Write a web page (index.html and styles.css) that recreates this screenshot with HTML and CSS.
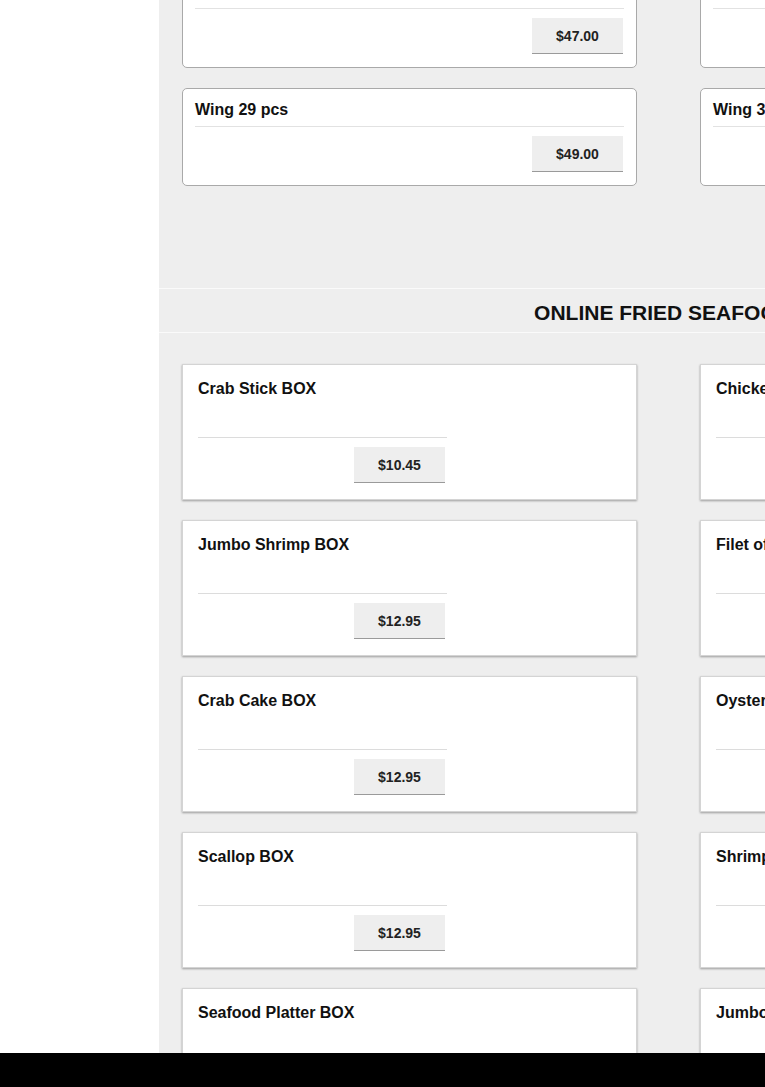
FILE: index.html
```html
<!DOCTYPE html>
<html lang="en">
<head>
<meta charset="utf-8">
<title>Online Menu</title>
<link rel="stylesheet" href="styles.css">
</head>
<body>
<div class="page">
  <aside class="sidebar"></aside>
  <main class="main">
    <section class="grid wings">
      <div class="wcard">
        <div class="wtitle">Wing 27 pcs</div>
        <div class="brow"><button class="price">$47.00</button></div>
      </div>
      <div class="wcard">
        <div class="wtitle">Wing 28 pcs</div>
        <div class="brow"><button class="price">$48.00</button></div>
      </div>
      <div class="wcard">
        <div class="wtitle">Wing 29 pcs</div>
        <div class="brow"><button class="price">$49.00</button></div>
      </div>
      <div class="wcard">
        <div class="wtitle">Wing 30 pcs</div>
        <div class="brow"><button class="price">$50.00</button></div>
      </div>
    </section>

    <div class="band"><h2>ONLINE FRIED SEAFOOD</h2></div>

    <section class="grid seafood">
      <div class="scard"><div class="sbody"><div class="stitle">Crab Stick BOX</div><div class="desc"></div><div class="brow"><button class="price">$10.45</button></div></div></div>
      <div class="scard"><div class="sbody"><div class="stitle">Chicken Tender BOX</div><div class="desc"></div><div class="brow"><button class="price">$10.45</button></div></div></div>
      <div class="scard"><div class="sbody"><div class="stitle">Jumbo Shrimp BOX</div><div class="desc"></div><div class="brow"><button class="price">$12.95</button></div></div></div>
      <div class="scard"><div class="sbody"><div class="stitle">Filet of Fish BOX</div><div class="desc"></div><div class="brow"><button class="price">$12.95</button></div></div></div>
      <div class="scard"><div class="sbody"><div class="stitle">Crab Cake BOX</div><div class="desc"></div><div class="brow"><button class="price">$12.95</button></div></div></div>
      <div class="scard"><div class="sbody"><div class="stitle">Oyster BOX</div><div class="desc"></div><div class="brow"><button class="price">$12.95</button></div></div></div>
      <div class="scard"><div class="sbody"><div class="stitle">Scallop BOX</div><div class="desc"></div><div class="brow"><button class="price">$12.95</button></div></div></div>
      <div class="scard"><div class="sbody"><div class="stitle">Shrimp BOX</div><div class="desc"></div><div class="brow"><button class="price">$12.95</button></div></div></div>
      <div class="scard"><div class="sbody"><div class="stitle">Seafood Platter BOX</div><div class="desc"></div><div class="brow"><button class="price">$14.95</button></div></div></div>
      <div class="scard"><div class="sbody"><div class="stitle">Jumbo Wing BOX</div><div class="desc"></div><div class="brow"><button class="price">$12.95</button></div></div></div>
    </section>
  </main>
</div>
<footer class="bottombar"></footer>
</body>
</html>
```

FILE: styles.css
```css
html, body {
  margin: 0;
  padding: 0;
}
body {
  font-family: "Liberation Sans", Arial, sans-serif;
  color: #111;
  background: #fff;
  overflow: hidden;
  height: 1087px;
}
.page {
  display: flex;
  align-items: flex-start;
}
.sidebar {
  width: 159px;
  flex-shrink: 0;
  align-self: stretch;
  background: #fff;
}
.main {
  width: 1008px;
  flex-shrink: 0;
  background: #eeeeee;
  min-height: 1200px;
}
.grid {
  display: grid;
  grid-template-columns: 455px 455px;
  column-gap: 63px;
  row-gap: 20px;
  padding: 0 23px;
}
.wings {
  margin-top: -30px;
  padding-bottom: 102px;
}
.wcard {
  background: #fff;
  border: 1px solid #a9a9a9;
  border-radius: 5px;
  padding: 11px 12px 13px;
}
.wtitle {
  font-size: 16px;
  font-weight: bold;
  line-height: 18px;
  padding: 1px 0 7px 0;
  border-bottom: 1px solid #e2e2e2;
}
.brow {
  display: flex;
  justify-content: flex-end;
  margin-top: 9px;
}
.price {
  width: 91px;
  height: 36px;
  background: #eeeeee;
  border: none;
  border-bottom: 1px solid #9a9a9a;
  font-family: "Liberation Sans", Arial, sans-serif;
  font-size: 14px;
  font-weight: bold;
  color: #222;
  padding: 0;
}
.wcard .price {
  margin-right: 1px;
}
.band {
  border-top: 1px solid #fafafa;
  border-bottom: 1px solid #fafafa;
  box-sizing: border-box;
  height: 45px;
  padding-top: 4px;
  display: flex;
  align-items: center;
  justify-content: center;
}
.band h2 {
  margin: 0;
  font-size: 21px;
  font-weight: bold;
  line-height: 24px;
  color: #111;
}
.seafood {
  padding-top: 31px;
}
.scard {
  background: #fff;
  border: 1px solid #d4d4d4;
  box-shadow: 0 1px 2px rgba(0, 0, 0, 0.35);
  padding: 15px 15px 16px;
}
.sbody {
  width: 249px;
}
.stitle {
  font-size: 16px;
  font-weight: bold;
  line-height: 18px;
  white-space: nowrap;
}
.desc {
  height: 39px;
  border-bottom: 1px solid #dcdcdc;
}
.sbody .price {
  margin-right: 2px;
}
.bottombar {
  position: fixed;
  left: 0;
  right: 0;
  bottom: 0;
  height: 34px;
  background: #000;
}
```
